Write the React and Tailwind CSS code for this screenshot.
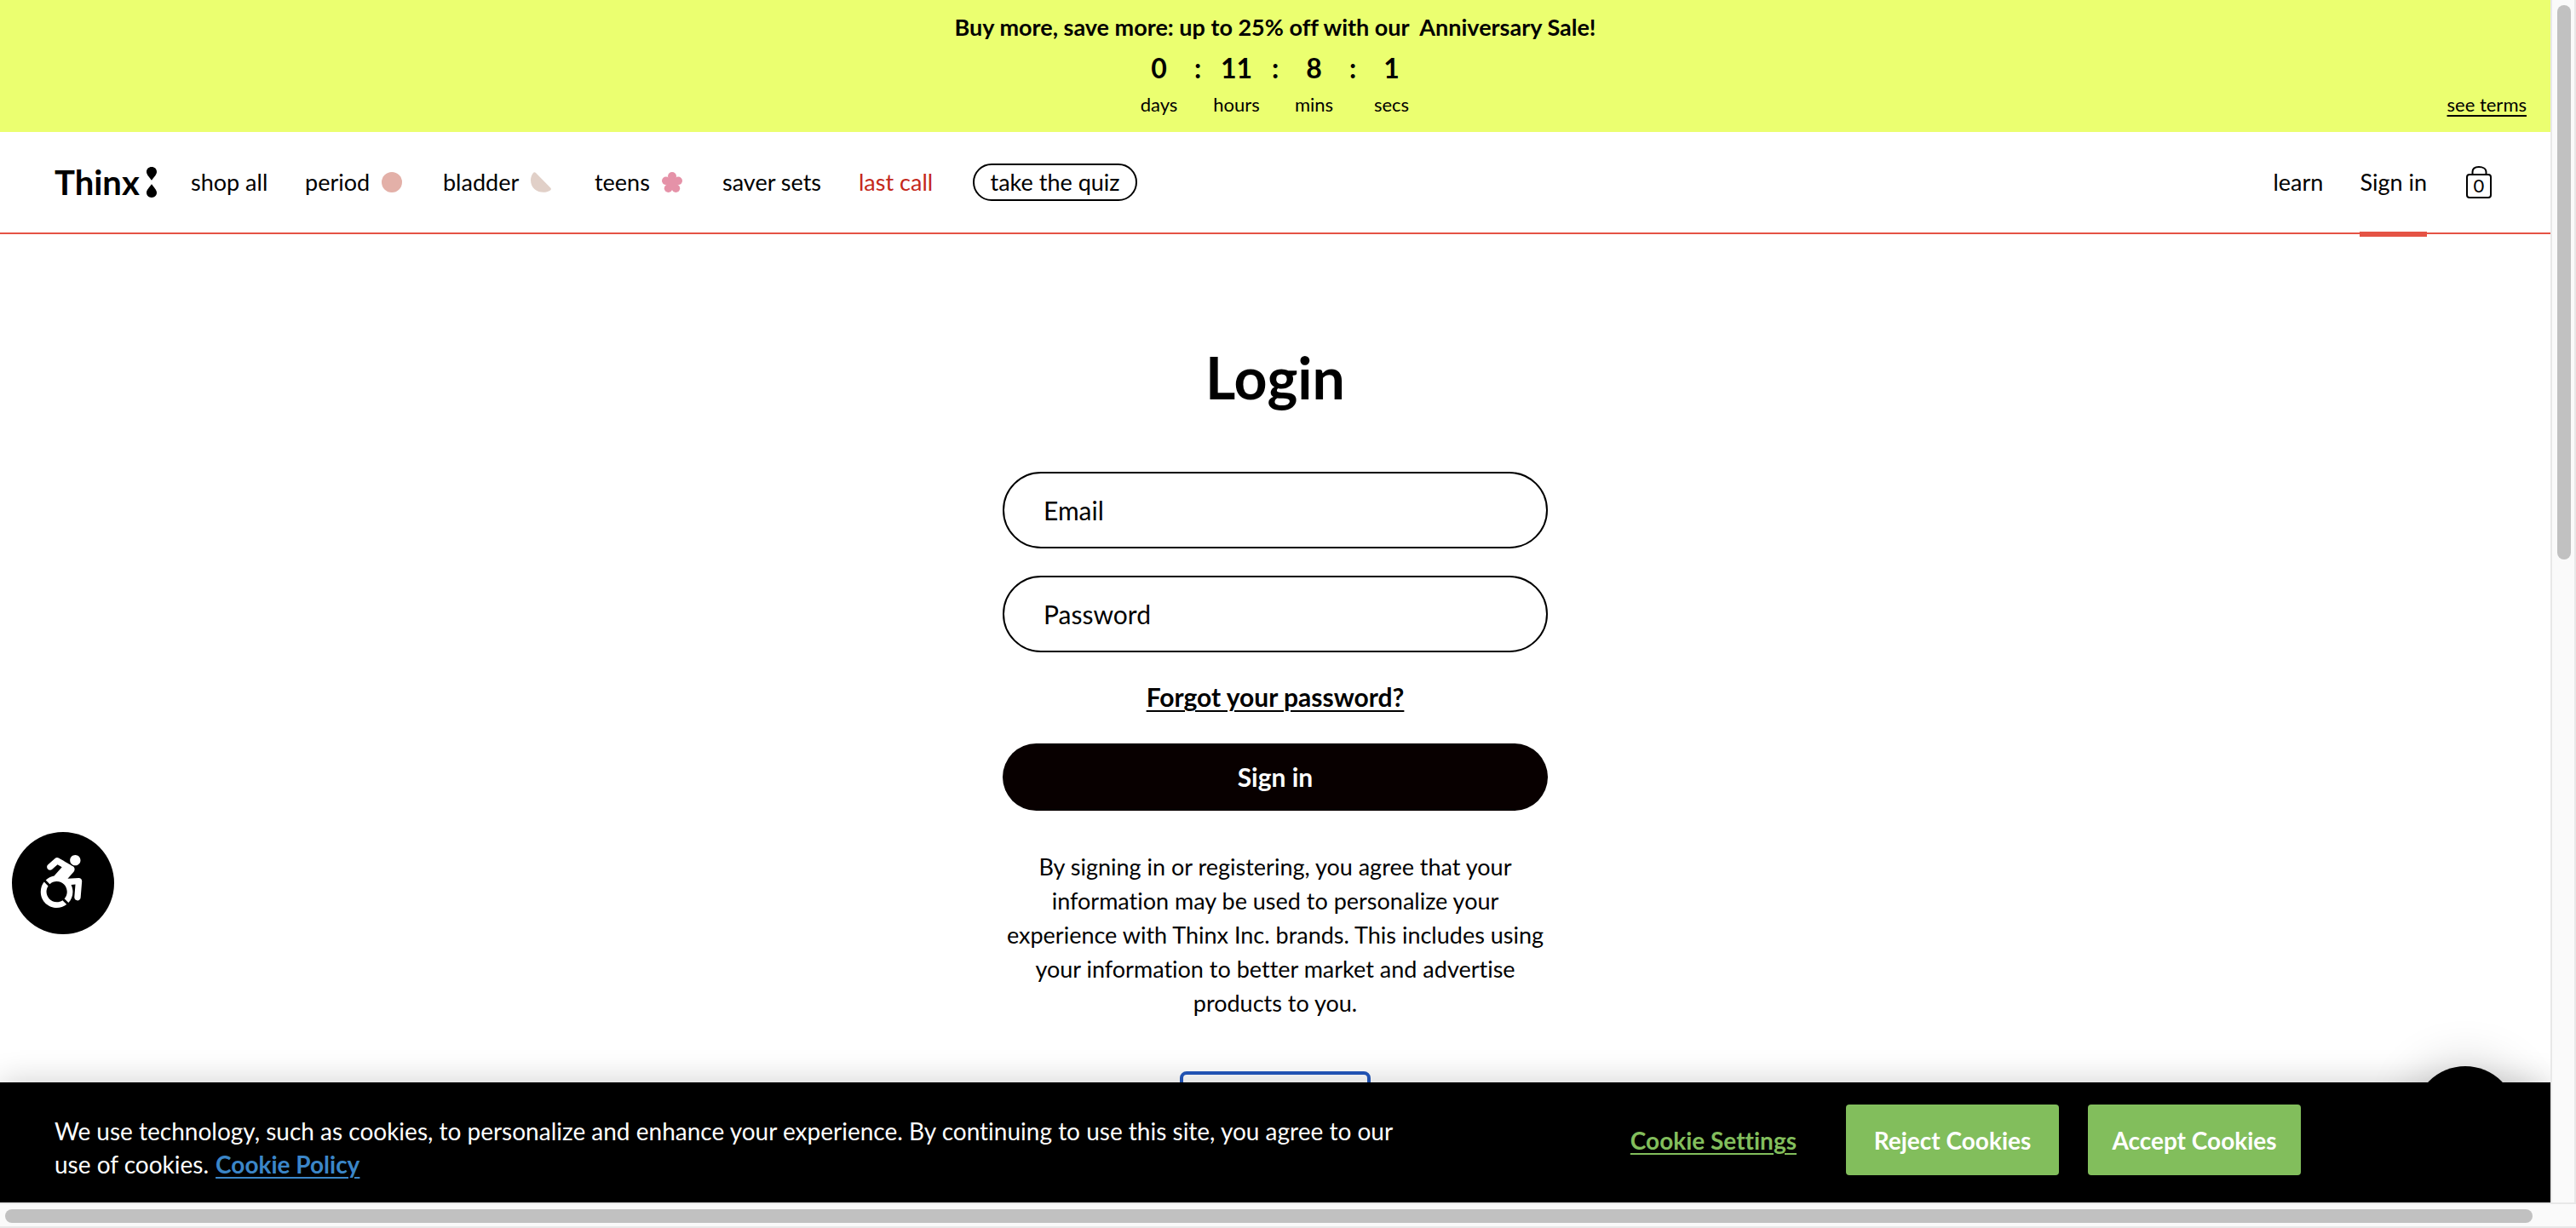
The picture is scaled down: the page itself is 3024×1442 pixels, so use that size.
import { FaAccessibleIcon } from "react-icons/fa";

const countdown = [
  { value: "0", label: "days" },
  { value: "11", label: "hours" },
  { value: "8", label: "mins" },
  { value: "1", label: "secs" },
];

function PeriodIcon() {
  return (
    <svg viewBox="0 0 24 24" className="size-6" aria-hidden="true">
      <circle cx="12" cy="12" r="12" fill="#e3b0a8" />
    </svg>
  );
}

function BladderIcon() {
  return (
    <svg viewBox="0 0 24 24" className="size-6" aria-hidden="true">
      <path
        d="M3.2 .8C4 -.2 5.2 .1 6 1L23.2 18.4C24.2 19.4 24.1 20.7 23 21.5C14.5 27 0 22.500 0 9.500C0 6 1.500 2.800 3.200 .8Z"
        fill="#e1d0c8"
      />
    </svg>
  );
}

function FlowerIcon() {
  return (
    <svg viewBox="0 0 24 24" className="size-6" aria-hidden="true">
      <g fill="#e592a8">
        <circle cx="12" cy="5" r="5" />
        <circle cx="4.800" cy="10.300" r="4.800" />
        <circle cx="19.200" cy="10.300" r="4.800" />
        <circle cx="7.600" cy="19.200" r="4.800" />
        <circle cx="16.400" cy="19.200" r="4.800" />
        <circle cx="12" cy="13" r="6.500" />
      </g>
    </svg>
  );
}

const links = [
  { label: "shop all", width: "w-[134px]" },
  { label: "period", width: "w-[162px]", icon: <PeriodIcon /> },
  { label: "bladder", width: "w-[178px]", icon: <BladderIcon /> },
  { label: "teens", width: "w-[150px]", icon: <FlowerIcon /> },
  { label: "saver sets", width: "w-[160px]" },
  { label: "last call", width: "w-[134px]", color: "text-[#c4281c]" },
];

function Banner() {
  return (
    <section className="grid grid-cols-[1fr_auto_1fr] items-end bg-[#ebff70] px-7 py-4">
      <div className="col-start-2 flex flex-col items-center">
        <p className="text-[27px] leading-8 font-bold whitespace-pre">
          Buy more, save more: up to 25% off with our  Anniversary Sale!
        </p>
        <div className="mt-2 flex">
          {countdown.map((part, i) => (
            <div key={part.label} className="flex">
              {i > 0 && <span className="w-4 text-center text-[32px] leading-[48px] font-bold">:</span>}
              <div className="flex w-[75px] flex-col items-center gap-[3px]">
                <span className="text-[32px] leading-[48px] font-bold">{part.value}</span>
                <span className="text-[22px] leading-8">{part.label}</span>
              </div>
            </div>
          ))}
        </div>
      </div>
      <a href="#terms" className="justify-self-end text-[22px] leading-8 underline decoration-2 underline-offset-4">
        see terms
      </a>
    </section>
  );
}

function Logo() {
  return (
    <a href="#home" className="flex w-40 items-center gap-2" aria-label="Thinx">
      <span className="text-[40px] leading-none font-bold">Thinx</span>
      <svg viewBox="0 0 12 36" className="h-9 w-3" aria-hidden="true">
        <path d="M6 0C9.500 0 12 2.400 12 5.700C12 9 9 11.500 6.300 15.500H5.700C3 11.500 0 9 0 5.700C0 2.400 2.500 0 6 0Z" />
        <path d="M6 36C9.500 36 12 33.600 12 30.300C12 27 9 24.500 6.300 20.500H5.700C3 24.500 0 27 0 30.300C0 33.600 2.500 36 6 36Z" />
      </svg>
    </a>
  );
}

function Header() {
  return (
    <header className="flex h-30 items-center border-b-2 border-[#e55345] pr-[69px] pl-16 text-[27px]">
      <Logo />
      <nav className="flex items-center" aria-label="Shop">
        {links.map((link) => (
          <a key={link.label} href="#shop" className={`flex items-center gap-3.5 ${link.width} ${link.color ?? ""}`}>
            {link.label}
            {link.icon}
          </a>
        ))}
        <button className="h-11 w-[193px] rounded-[22px] border-2 border-black leading-8">take the quiz</button>
      </nav>
      <nav className="ml-auto flex items-center" aria-label="Account">
        <a href="#learn" className="w-[102px]">learn</a>
        <a href="#signin" className="relative flex h-30 items-center">
          Sign in
          <span className="absolute inset-x-0 -bottom-1 h-1.5 bg-[#e55345]" />
        </a>
        <button className="relative ml-[46px] h-10 w-[30px]" aria-label="Cart">
          <svg viewBox="0 0 30 40" className="h-10 w-[30px]" fill="none" stroke="black" strokeWidth="2" aria-hidden="true">
            <rect x="1" y="11" width="28" height="27" rx="3" />
            <path d="M7.500 11V8C7.500 4 10.500 2 15 2S23.500 4 23.500 8V11" />
          </svg>
          <span className="absolute inset-x-0 top-3 text-center text-[22px] leading-6">0</span>
        </button>
      </nav>
    </header>
  );
}

function Field({ label, type }) {
  return (
    <input
      type={type}
      aria-label={label}
      placeholder={label}
      className="h-[90px] w-full rounded-[45px] border-2 border-black px-[46px] text-[30px] placeholder:text-black"
    />
  );
}

function Login() {
  return (
    <main className="mx-auto flex w-full max-w-[640px] flex-col items-center pt-32">
      <h1 className="text-[68px] leading-20 font-bold">Login</h1>
      <form className="mt-[71px] flex w-full flex-col items-center" onSubmit={(e) => e.preventDefault()}>
        <div className="flex w-full flex-col gap-8">
          <Field label="Email" type="email" />
          <Field label="Password" type="password" />
        </div>
        <a href="#forgot" className="mt-[30px] text-[30px] leading-11 font-bold underline decoration-2 underline-offset-4">
          Forgot your password?
        </a>
        <button className="mt-[33px] h-[79px] w-full rounded-[40px] bg-[#080000] text-[30px] font-bold text-white">
          Sign in
        </button>
      </form>
      <p className="mt-[46px] text-center text-[27px] leading-10">
        By signing in or registering, you agree that your information may be used to personalize your experience with
        Thinx Inc. brands. This includes using your information to better market and advertise products to you.
      </p>
      <div className="mt-[60px] h-20 w-56 shrink-0 rounded-lg border-4 border-[#2458bd]" />
    </main>
  );
}

function CookieBar() {
  return (
    <section
      aria-label="Cookies"
      className="absolute inset-x-0 bottom-0 flex h-[141px] items-start bg-black pt-[26px] pl-16 text-[28px] text-white shadow-[0_0_36px_rgba(0,0,0,0.2)]"
    >
      <p className="mt-3 w-[1600px] leading-[39px]">
        We use technology, such as cookies, to personalize and enhance your experience. By continuing to use this site,
        you agree to our
        <br />
        use of cookies.
        <a href="#policy" className="ml-2 font-bold text-[#3b86c8] underline decoration-2 underline-offset-4">
          Cookie Policy
        </a>
      </p>
      <div className="mr-[293px] ml-auto flex items-center font-bold">
        <button className="mr-[58px] text-[#82be5c] underline decoration-2 underline-offset-4">Cookie Settings</button>
        <button className="mr-[34px] h-[83px] w-[250px] rounded-sm bg-[#82be5c]">Reject Cookies</button>
        <button className="h-[83px] w-[250px] rounded-sm bg-[#82be5c]">Accept Cookies</button>
      </div>
    </section>
  );
}

export default function App() {
  return (
    <div className="grid h-screen grid-cols-[minmax(0,1fr)_30px] grid-rows-[minmax(0,1fr)_30px] bg-white font-['Lato',sans-serif] text-black [font-variant-ligatures:none]">
      <div className="relative overflow-hidden">
        <Banner />
        <Header />
        <Login />
        <button
          aria-label="Accessibility"
          className="absolute bottom-[315px] left-3.5 flex size-30 items-center justify-center rounded-full bg-black pr-1 pb-1 text-white"
        >
          <FaAccessibleIcon className="size-[62px]" />
        </button>
        <button
          aria-label="Chat"
          className="absolute right-10 bottom-10 size-30 rounded-full bg-black shadow-[0_0_60px_rgba(0,0,0,0.2)]"
        />
        <CookieBar />
      </div>
      <div className="border-x-2 border-[#e8e8e8] bg-[#fafafa] py-1.5 pl-1.5">
        <div className="h-[46.5%] w-4 rounded-full bg-[#c1c1c1]" />
      </div>
      <div className="col-span-2 border-y-2 border-[#e8e8e8] bg-[#fafafa] py-1.5 pr-[51px] pl-1.5">
        <div className="h-4 rounded-full bg-[#c1c1c1]" />
      </div>
    </div>
  );
}
